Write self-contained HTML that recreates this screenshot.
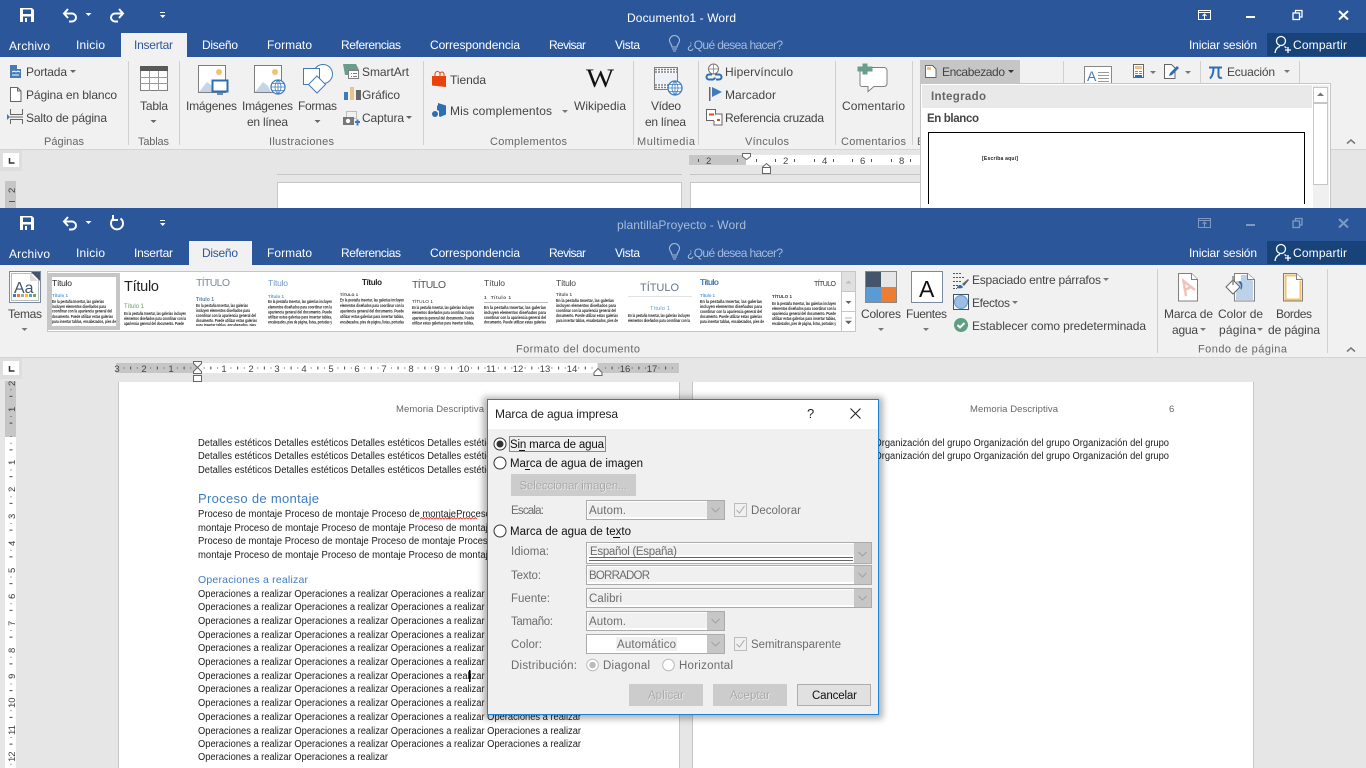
<!DOCTYPE html>
<html lang="es"><head><meta charset="utf-8"><title>Word</title>
<style>
html,body{margin:0;padding:0;background:#e6e6e6;overflow:hidden}
svg{display:block}
text{font-family:"Liberation Sans",sans-serif;font-size:12px;fill:#444;white-space:pre}
.tab{fill:#fff;font-size:12px}
.act{fill:#2b579a}
.gr{fill:#666;font-size:11px}
.w{fill:#fff}
.r{font-size:9.500px;fill:#444}
.b{font-size:10px;fill:#1c1c1c}
.g{font-size:4.200px;fill:#222;font-weight:bold}
.d{fill:#6d6d6d;font-size:11.500px}
.h{fill:#444}
.dis{fill:#a6a6a6;font-size:11.500px}
</style></head><body>
<svg xmlns="http://www.w3.org/2000/svg" width="1366" height="768" viewBox="0 0 1366 768">
<defs>
<clipPath id="gal"><rect x="48" y="272" width="794" height="54"/></clipPath>
<filter id="sh" x="-10%" y="-10%" width="120%" height="120%"><feGaussianBlur stdDeviation="3.5"/></filter>
<g id="save"><path d="M20 8h12l2 2v12H20z" fill="#fff"/><rect x="23" y="9.500" width="8" height="4.500" fill="#2b579a"/><rect x="23" y="16.500" width="8" height="5.500" fill="#2b579a"/><rect x="25" y="18" width="2" height="4" fill="#fff"/></g>
<g id="undo" fill="none" stroke="#fff" stroke-width="2"><path d="M68 9l-4 4.500 4 4.500"/><path d="M64.500 13.500H72a4 4 0 0 1 0 8h-3"/></g>
<g id="cust"><rect x="160" y="12" width="5" height="1" fill="#fff"/><path d="M160 15h5.500l-2.750 3z" fill="#fff"/><path d="M85.500 13h6l-3 3z" fill="#fff"/></g>
<g id="person" fill="none" stroke="#fff" stroke-width="1.300"><circle cx="1281" cy="41" r="4.500"/><path d="M1275 53c.5-4 2.500-6 5-6.500"/><path d="M1284.500 46.500l2 1.500"/><path d="M1288 47v6M1285 50h6"/></g>
<g id="bulb" fill="none" stroke="#a9bbd6" stroke-width="1.100"><path d="M672 47c0-3-2.500-3.500-2.500-6.500a5 5 0 0 1 10 0c0 3-2.500 3.500-2.500 6.500z"/><path d="M672 49h5M673 51h3"/></g>
</defs>

<!-- TOP WINDOW -->
<rect width="1366" height="57" fill="#2b579a"/>
<rect y="57" width="1366" height="92" fill="#f1f1f1"/>
<rect y="149" width="1366" height="1" fill="#d4d4d4"/>
<rect y="150" width="1366" height="58" fill="#e6e6e6"/>
<rect x="121" y="33" width="66" height="24" fill="#f1f1f1"/>
<rect x="1267" y="33" width="99" height="23" fill="#174379"/>
<use href="#save"/><use href="#undo"/><use href="#cust"/>
<g fill="none" stroke="#fff" stroke-width="2"><path d="M119 9l4 4.500-4 4.500"/><path d="M122.500 13.500H115a4 4 0 0 0 0 8h3"/></g>
<text x="627" y="22" textLength="109" class="w" style="font-size:12px">Documento1 - Word</text>
<g fill="none" stroke="#fff"><rect x="1198.500" y="10.500" width="12" height="9"/><path d="M1199 12.500h11" stroke-width="1"/><path d="M1204.500 19v-5M1202.500 16l2-2 2 2"/></g>
<rect x="1246" y="16" width="9" height="2" fill="#fff"/>
<g fill="none" stroke="#fff" stroke-width="1.300"><rect x="1293" y="13" width="6.500" height="6.500"/><path d="M1295.500 13v-2.500h6.500v6.500h-2.500"/></g>
<path d="M1339 11l9 8.500M1348 11l-9 8.500" stroke="#fff" stroke-width="2" fill="none"/>

<g class="tabs">
<text x="9" y="50" textLength="41" class="tab">Archivo</text>
<text x="76" y="49" textLength="29" class="tab">Inicio</text>
<text x="134" y="49" textLength="39" class="tab act">Insertar</text>
<text x="202" y="49" textLength="36" class="tab">Diseño</text>
<text x="267" y="49" textLength="45" class="tab">Formato</text>
<text x="341" y="49" textLength="60" class="tab">Referencias</text>
<text x="430" y="49" textLength="90" class="tab">Correspondencia</text>
<text x="549" y="49" textLength="37" class="tab">Revisar</text>
<text x="615" y="49" textLength="25" class="tab">Vista</text>
<text x="687" y="49" textLength="96" class="tab" style="fill:#a9bbd6">¿Qué desea hacer?</text>
<text x="1189" y="49" textLength="68" class="tab">Iniciar sesión</text>
<text x="1293" y="49" textLength="54" class="tab">Compartir</text>
</g>
<use href="#person"/><use href="#bulb"/>

<!-- separators top -->
<g fill="#d0d0d0"><rect x="128" y="61" width="1" height="84"/><rect x="179" y="61" width="1" height="84"/><rect x="423" y="61" width="1" height="84"/><rect x="633" y="61" width="1" height="84"/><rect x="698" y="61" width="1" height="84"/><rect x="835" y="61" width="1" height="84"/><rect x="912" y="61" width="1" height="84"/><rect x="1063" y="61" width="1" height="22"/><rect x="1200" y="61" width="1" height="22"/><rect x="1299" y="61" width="1" height="22"/></g>

<!-- Páginas -->
<path d="M10 65h7l4 4v9H10z" fill="#4a7ab5"/><path d="M17 65v4h4" fill="#fff"/><path d="M12 72l2-1 2 1 2-1 2 1M12 75h7" stroke="#fff" fill="none"/>
<path d="M10.500 87.500h7l3.500 3.500v10.500H10.500zM17.500 87.500v3.500H21" fill="#fff" stroke="#666"/>
<path d="M10.500 109v5.500h12V109M10.500 124v-4.500h12v4.500M10 117h13" fill="none" stroke="#666"/><path d="M7 114l3 3-3 3z" fill="#3f7cbf"/>
<text x="26" y="76" textLength="41">Portada</text><path d="M70 70h6l-3 3z" fill="#666"/>
<text x="26" y="99" textLength="91">Página en blanco</text>
<text x="26" y="122" textLength="81">Salto de página</text>
<text x="44" y="145" textLength="40" class="gr">Páginas</text>

<!-- Tablas -->
<rect x="140.500" y="66.500" width="27" height="24" fill="#fff" stroke="#808080"/><rect x="140" y="66" width="28" height="5" fill="#595959"/>
<path d="M140 77.500h28M140 83.500h28M149.500 71v20M158.500 71v20" stroke="#9a9a9a" fill="none"/>
<text x="140" y="110" textLength="28">Tabla</text><path d="M150.500 120h6l-3 3z" fill="#666"/>
<text x="138" y="145" textLength="31" class="gr">Tablas</text>

<!-- Ilustraciones -->
<g>
<rect x="198.500" y="65.500" width="27" height="27" fill="#fff" stroke="#7f7f7f"/><circle cx="219" cy="72" r="3" fill="#f0c36d"/><path d="M199 92l8-10 5 4 3 6z" fill="#c5d5e8"/>
<rect x="212.500" y="80.500" width="15" height="11" fill="#fff" stroke="#2e6fb2" stroke-width="2"/><path d="M217 94h6" stroke="#2e6fb2" stroke-width="1.500"/>
<rect x="254.500" y="65.500" width="27" height="27" fill="#fff" stroke="#7f7f7f"/><circle cx="275" cy="72" r="3" fill="#f0c36d"/><path d="M255 92l8-10 5 4 3 6z" fill="#c5d5e8"/>
<circle cx="278" cy="87" r="7" fill="#fff" stroke="#3f7cbf" stroke-width="1.300"/><path d="M271 87h14M278 80v14M272.500 83.500h11M272.500 90.500h11M278 80c-4 4-4 10 0 14M278 80c4 4 4 10 0 14" stroke="#3f7cbf" fill="none" stroke-width=".8"/>
<circle cx="323" cy="74" r="9.500" fill="#fff" stroke="#3f7cbf"/><rect x="303.500" y="68.500" width="16" height="16" fill="#fff" stroke="#3f7cbf"/><path d="M317 76l8.500 8.500-8.500 8.500-8.500-8.500z" fill="#fff" stroke="#3f7cbf"/>
<path d="M343 64h13l3 6h-10l-1 5h-3z" fill="#6a9e8c"/><rect x="348.500" y="70.500" width="10" height="8" fill="#fff" stroke="#7f7f7f"/><path d="M351 73.500h1M353 73.500h4M351 76.500h1M353 76.500h4" stroke="#7f7f7f"/>
<rect x="344" y="92" width="4" height="8" fill="#3f7cbf"/><rect x="350" y="87" width="4" height="13" fill="#e9c38b"/><rect x="356" y="90" width="5" height="10" fill="#666"/>
<rect x="346.500" y="111.500" width="10" height="7" fill="none" stroke="#888" stroke-dasharray="1 1"/><rect x="343" y="117" width="11" height="8" fill="#777"/><circle cx="348" cy="121" r="2.200" fill="#fff"/><path d="M355 122h5M357.500 119.500v6" stroke="#3f7cbf" stroke-width="2"/>
<text x="186" y="110" textLength="51">Imágenes</text>
<text x="242" y="110" textLength="51">Imágenes</text><text x="247" y="126" textLength="41">en línea</text>
<text x="298" y="110" textLength="39">Formas</text><path d="M314.500 120h6l-3 3z" fill="#666"/>
<text x="362" y="76" textLength="47">SmartArt</text><text x="362" y="99" textLength="38">Gráfico</text><text x="362" y="122" textLength="42">Captura</text><path d="M406 116h6l-3 3z" fill="#666"/>
<text x="269" y="145" textLength="65" class="gr">Ilustraciones</text>
</g>

<!-- Complementos -->
<path d="M432 76h14v11l-14-1.500z" fill="#e8420d"/><path d="M435 76v-2a2 2 0 0 1 5 0v2M440 74a2 2 0 0 1 4 0v2" stroke="#e8420d" fill="none"/>
<path d="M438 103l8 2.500v9l-6 2.500-1-1v-5l-2-1v-4l1-1z" fill="#2e6fb2"/><circle cx="435" cy="114" r="3" fill="#2e6fb2"/>
<text x="450" y="84" textLength="36">Tienda</text>
<text x="450" y="115" textLength="102">Mis complementos</text><path d="M562 110h6l-3 3z" fill="#777"/>
<text x="586" y="87" style="font-family:'Liberation Serif',serif;font-size:26px;fill:#111" textLength="28" lengthAdjust="spacingAndGlyphs">W</text>
<text x="574" y="110" textLength="52">Wikipedia</text>
<text x="490" y="145" textLength="77" class="gr">Complementos</text>

<!-- Multimedia -->
<rect x="654.500" y="67.500" width="23" height="22" fill="#fff" stroke="#7f7f7f"/><path d="M655 69.500h22M655 72h22M655 85h22M655 87.500h22" stroke="#7f7f7f" stroke-dasharray="2 1" stroke-width="1.500"/><rect x="655" y="73" width="22" height="11" fill="#eef2f7"/>
<circle cx="675" cy="88" r="7" fill="#fff" stroke="#3f7cbf" stroke-width="1.300"/><path d="M668 88h14M675 81v14M669.500 84.500h11M669.500 91.500h11M675 81c-4 4-4 10 0 14M675 81c4 4 4 10 0 14" stroke="#3f7cbf" fill="none" stroke-width=".8"/>
<text x="651" y="110" textLength="30">Vídeo</text><text x="645" y="126" textLength="41">en línea</text>
<text x="637" y="145" textLength="58" class="gr">Multimedia</text>

<!-- Vínculos -->
<circle cx="713.500" cy="69" r="5" fill="#fff" stroke="#777"/><path d="M708.500 69h10M713.500 64v10" stroke="#777" stroke-width=".7"/>
<path d="M712 75h-3a2.500 2.500 0 0 0 0 5h4a2.500 2.500 0 0 0 2-2M715 75h4a2.500 2.500 0 0 1 0 5h-3" stroke="#2e6fb2" stroke-width="2" fill="none" transform="translate(0,-.5)"/>
<rect x="709" y="87" width="1.500" height="14" fill="#666"/><path d="M712 87l10 5-10 5z" fill="#3f7cbf"/>
<rect x="706.500" y="109.500" width="9" height="11" fill="#fff" stroke="#666"/><path d="M715.500 114h6.500v11h-8v-4" fill="#fff" stroke="#666"/><rect x="709" y="113.500" width="5" height="2" fill="#d94a2b"/><rect x="717" y="119" width="3" height="2" fill="#d94a2b"/>
<text x="725" y="76" textLength="68">Hipervínculo</text><text x="725" y="99" textLength="51">Marcador</text><text x="725" y="122" textLength="99">Referencia cruzada</text>
<text x="745" y="145" textLength="44" class="gr">Vínculos</text>

<!-- Comentarios -->
<path d="M862 67.500h22a3 3 0 0 1 3 3v13a3 3 0 0 1-3 3h-10l-6 5v-5h-6a2 2 0 0 1-2-2v-15z" fill="#fff" stroke="#808080"/>
<path d="M858 66h5v-3h5v3h5v5h-5v3h-5v-3h-5z" fill="#6a9e8c" transform="translate(-.500,.5)"/>
<text x="842" y="110" textLength="63">Comentario</text>
<text x="841" y="145" textLength="65" class="gr">Comentarios</text>
<text x="917" y="145" class="gr">E</text>

<!-- Encabezado etc -->
<rect x="920" y="60" width="100" height="23" fill="#c6c6c6"/>
<path d="M925.500 65.500h7l3.500 3.500v8.500H925.500z" fill="#fff" stroke="#666"/><rect x="927" y="67" width="4" height="3" fill="#f0c36d"/>
<text x="942" y="76" textLength="63">Encabezado</text><path d="M1008 70h6l-3 3z" fill="#333"/>
<rect x="1084.500" y="66.500" width="27" height="20" fill="#fff" stroke="#888"/><text x="1087" y="81" style="font-size:14px;fill:#3f7cbf">A</text><path d="M1098 72.500h11M1098 75.500h11M1098 78.500h11M1098 81.500h11" stroke="#999"/>
<rect x="1133.500" y="64.500" width="10" height="13" fill="#fff" stroke="#666"/><rect x="1135" y="66" width="7" height="3" fill="#e9c38b"/><path d="M1135 71.500h3M1139 71.500h3M1135 73.500h3M1139 73.500h3" stroke="#888"/><rect x="1135" y="75" width="7" height="2" fill="#2e6fb2"/>
<path d="M1150 71h6l-3 3z" fill="#777"/>
<path d="M1164.500 64.500h7l3.500 3.500v10.500H1164.500z" fill="#fff" stroke="#666"/><path d="M1169 76l1-3 7-7 2 2-7 7z" fill="#2e6fb2"/>
<path d="M1185 71h6l-3 3z" fill="#777"/>
<path d="M1209 67.500h13M1213.500 68c0 5-1 8-3.500 10.500M1218.500 68v7.500c0 2 1.500 3 3.500 2" fill="none" stroke="#2e6fb2" stroke-width="2"/>
<text x="1227" y="76" textLength="48">Ecuación</text><path d="M1284 70h6l-3 3z" fill="#777"/>
<path d="M1347 143.500l4-3.500 4 3.500" fill="none" stroke="#777" stroke-width="1.500"/>

<!-- Top lower area -->
<rect x="0" y="150" width="22" height="21" fill="#dedede"/>
<rect x="3" y="153" width="16" height="14" fill="#fff"/><path d="M9.500 158v5h5" fill="none" stroke="#333" stroke-width="1.500"/>
<rect x="5" y="181" width="11" height="27" fill="#c6c6c6"/>
<text transform="translate(15,193) rotate(-90)" class="r">2</text>
<rect x="9" y="201" width="6" height="1" fill="#555"/>
<rect x="689" y="155" width="57" height="10" fill="#c6c6c6"/><rect x="746" y="155" width="174" height="10" fill="#fff"/>
<g class="r"><text x="706" y="164" class="r">2</text><text x="783" y="164" class="r">2</text><text x="822" y="164" class="r">4</text><text x="860" y="164" class="r">6</text><text x="899" y="164" class="r">8</text></g>
<path d="M698.500 159v3M737.500 159v3M756.500 159v3M775.500 159v3M794.500 159v3M814.500 159v3M833.500 159v3M852.500 159v3M871.500 159v3M891.500 159v3M910.500 159v3" stroke="#555" fill="none"/>
<path d="M742.500 153.500h8v3l-4 3-4-3z" fill="#fff" stroke="#666"/>
<path d="M762.500 167l4-3.500 4 3.500v6.500h-8z" fill="#fff" stroke="#666"/><path d="M762.500 167.500h8" stroke="#666"/>
<rect x="277" y="174" width="405" height="1" fill="#c6c6c6"/><rect x="690" y="174" width="230" height="1" fill="#c6c6c6"/>
<rect x="277.500" y="182.500" width="404" height="30" fill="#fff" stroke="#c6c6c6"/>
<rect x="690.500" y="182.500" width="300" height="30" fill="#fff" stroke="#c6c6c6"/>

<!-- Dropdown -->
<rect x="920.500" y="83.500" width="410" height="130" fill="#fff" stroke="#c6c6c6"/>
<rect x="922" y="85" width="390" height="23" fill="#e9e9e9"/>
<text x="931" y="100" textLength="55" style="font-weight:bold;fill:#666;font-size:11.500px">Integrado</text>
<text x="927" y="122" textLength="52" style="font-weight:bold;fill:#444;font-size:11.500px">En blanco</text>
<path d="M928.500 204V132.500h376V204" fill="#fff" stroke="#000"/>
<text x="982" y="160" textLength="36" style="font-size:5px;font-weight:bold;fill:#222">[Escriba aquí]</text>
<rect x="1313" y="85" width="16" height="123" fill="#f0f0f0"/>
<rect x="1313.500" y="87.500" width="14" height="15" fill="#fff" stroke="#c6c6c6"/><path d="M1317 96h7l-3.500-3.500z" fill="#777"/>
<rect x="1313.500" y="103.500" width="14" height="81" fill="#fff" stroke="#c6c6c6"/>

<!-- SECOND WINDOW -->
<rect y="208" width="1366" height="57" fill="#2b579a"/>
<rect y="265" width="1366" height="92" fill="#f1f1f1"/>
<rect y="357" width="1366" height="1" fill="#d4d4d4"/>
<rect y="358" width="1366" height="410" fill="#e6e6e6"/>
<rect x="189" y="241" width="63" height="24" fill="#f1f1f1"/>
<rect x="1267" y="241" width="99" height="23" fill="#174379"/>
<g transform="translate(0,208)"><use href="#save"/><use href="#undo"/><use href="#cust"/><use href="#person"/><use href="#bulb"/>
<path d="M113.500 10.500a6 6 0 1 0 7 0" fill="none" stroke="#fff" stroke-width="2"/><path d="M113 7v5h5" fill="none" stroke="#fff" stroke-width="2"/></g>
<text x="617" y="229" textLength="129" style="fill:#a9bbd6;font-size:12px">plantillaProyecto - Word</text>
<g transform="translate(0,208)" fill="none" stroke="#7f9ac0"><rect x="1198.500" y="10.500" width="12" height="9"/><path d="M1199 12.500h11"/><path d="M1204.500 19v-5M1202.500 16l2-2 2 2"/><path d="M1246 17h9" stroke-width="2"/><g stroke-width="1.300"><rect x="1293" y="13" width="6.500" height="6.500"/><path d="M1295.500 13v-2.500h6.500v6.500h-2.500"/></g><path d="M1339 11l9 8.500M1348 11l-9 8.500" stroke-width="2"/></g>

<text x="9" y="258" textLength="41" class="tab">Archivo</text>
<text x="76" y="257" textLength="29" class="tab">Inicio</text>
<text x="134" y="257" textLength="39" class="tab">Insertar</text>
<text x="202" y="257" textLength="36" class="tab act">Diseño</text>
<text x="267" y="257" textLength="45" class="tab">Formato</text>
<text x="341" y="257" textLength="60" class="tab">Referencias</text>
<text x="430" y="257" textLength="90" class="tab">Correspondencia</text>
<text x="549" y="257" textLength="37" class="tab">Revisar</text>
<text x="615" y="257" textLength="25" class="tab">Vista</text>
<text x="687" y="257" textLength="96" class="tab" style="fill:#a9bbd6">¿Qué desea hacer?</text>
<text x="1189" y="257" textLength="68" class="tab">Iniciar sesión</text>
<text x="1293" y="257" textLength="54" class="tab">Compartir</text>

<!-- Temas -->
<rect x="9.500" y="271.500" width="31" height="31" fill="#fff" stroke="#7a8aa0"/>
<rect x="11.500" y="273.500" width="27" height="27" fill="#fff" stroke="#bbb"/>
<path d="M31 272h9v9z" fill="#44546a"/><path d="M30 273l8 8h-8z" fill="#ddd"/>
<text x="14" y="293" style="font-size:16px;fill:#44546a">Aa</text>
<g><rect x="13" y="294" width="3" height="3" fill="#4472c4"/><rect x="17" y="294" width="3" height="3" fill="#ed7d31"/><rect x="21" y="294" width="3" height="3" fill="#a5a5a5"/><rect x="25" y="294" width="3" height="3" fill="#ffc000"/><rect x="29" y="294" width="3" height="3" fill="#5b9bd5"/><rect x="33" y="294" width="3" height="3" fill="#70ad47"/></g>
<text x="8" y="318" textLength="34">Temas</text><path d="M21.500 328h6l-3 3z" fill="#777"/>

<!-- Gallery -->
<rect x="47.500" y="271.500" width="808" height="60" fill="#fff" stroke="#c6c6c6"/>
<rect x="48" y="273" width="72" height="57" fill="#c6c6c6"/><rect x="52" y="277" width="64" height="49" fill="#fff"/>
<rect x="842" y="272" width="13" height="19" fill="#e0e0e0"/><path d="M842 291.500h13M842 311.500h13M841.500 272v59" stroke="#c6c6c6"/>
<path d="M845.500 283.500h6l-3-3z" fill="#bbb"/><path d="M845.500 301h6l-3 3z" fill="#666"/><path d="M845 318h7M845.500 321h6l-3 3z" fill="#666" stroke="#666" stroke-width=".5"/>
<g clip-path="url(#gal)">
<text x="52" y="286" textLength="20" style="font-size:8.500px;fill:#222">Título</text>
<text x="52" y="297" textLength="16" style="font-size:4.500px;fill:#5b9bd5;font-weight:bold">Título 1</text>
<text x="52" y="303" textLength="52" lengthAdjust="spacingAndGlyphs" class="g">En la pestaña Insertar, las galerías</text><text x="52" y="308" textLength="54" lengthAdjust="spacingAndGlyphs" class="g">incluyen elementos diseñados para</text><text x="52" y="312.500" textLength="60" lengthAdjust="spacingAndGlyphs" class="g">coordinar con la apariencia general del</text><text x="52" y="318" textLength="61" lengthAdjust="spacingAndGlyphs" class="g">documento. Puede utilizar estas galerías</text><text x="52" y="323" textLength="64" lengthAdjust="spacingAndGlyphs" class="g">para insertar tablas, encabezados, pies de</text>

<text x="124" y="291" textLength="35" style="font-size:14.500px;fill:#222">Título</text>
<text x="124" y="308" textLength="20" style="font-size:6px;fill:#6b9a56">Título 1</text>
<text x="124" y="315" textLength="62" lengthAdjust="spacingAndGlyphs" class="g">En la pestaña Insertar, las galerías incluyen</text><text x="124" y="320" textLength="62" lengthAdjust="spacingAndGlyphs" class="g">elementos diseñados para coordinar con la</text><text x="124" y="325" textLength="60" lengthAdjust="spacingAndGlyphs" class="g">apariencia general del documento. Puede</text>

<text x="196" y="286" textLength="34" style="font-size:10.500px;fill:#7a8aa0">TÍTULO</text>
<text x="196" y="301" textLength="18" style="font-size:5px;fill:#5a7fa8;font-weight:bold">Título 1</text>
<text x="196" y="307" textLength="52" lengthAdjust="spacingAndGlyphs" class="g">En la pestaña Insertar, las galerías</text><text x="196" y="312" textLength="54" lengthAdjust="spacingAndGlyphs" class="g">incluyen elementos diseñados para</text><text x="196" y="317" textLength="60" lengthAdjust="spacingAndGlyphs" class="g">coordinar con la apariencia general del</text><text x="196" y="322" textLength="61" lengthAdjust="spacingAndGlyphs" class="g">documento. Puede utilizar estas galerías</text><text x="196" y="326.500" textLength="60" lengthAdjust="spacingAndGlyphs" class="g">para insertar tablas, encabezados, pies</text>

<text x="268" y="286" textLength="20" style="font-size:8.500px;fill:#6f9bc8">Título</text>
<text x="268" y="298" textLength="16" style="font-size:4.500px;fill:#5b9bd5;font-weight:bold">Título 1</text>
<text x="268" y="303" textLength="64" lengthAdjust="spacingAndGlyphs" class="g">En la pestaña Insertar, las galerías incluyen</text><text x="268" y="308.500" textLength="64" lengthAdjust="spacingAndGlyphs" class="g">elementos diseñados para coordinar con la</text><text x="268" y="313.500" textLength="64" lengthAdjust="spacingAndGlyphs" class="g">apariencia general del documento. Puede</text><text x="268" y="318.500" textLength="64" lengthAdjust="spacingAndGlyphs" class="g">utilizar estas galerías para insertar tablas,</text><text x="268" y="323.500" textLength="64" lengthAdjust="spacingAndGlyphs" class="g">encabezados, pies de página, listas, portadas y</text>

<text x="362" y="285" textLength="20" style="font-size:8px;fill:#222;font-weight:bold">Título</text>
<text x="340" y="296" textLength="18" style="font-size:3.800px;fill:#222;font-weight:bold">TÍTULO 1</text>
<text x="340" y="301.500" textLength="64" lengthAdjust="spacingAndGlyphs" class="g">En la pestaña Insertar, las galerías incluyen</text><text x="340" y="307" textLength="64" lengthAdjust="spacingAndGlyphs" class="g">elementos diseñados para coordinar con la</text><text x="340" y="312.500" textLength="64" lengthAdjust="spacingAndGlyphs" class="g">apariencia general del documento. Puede</text><text x="340" y="318" textLength="64" lengthAdjust="spacingAndGlyphs" class="g">utilizar estas galerías para insertar tablas,</text><text x="340" y="323.500" textLength="64" lengthAdjust="spacingAndGlyphs" class="g">encabezados, pies de página, listas, portadas</text>

<text x="412" y="288" textLength="34" style="font-size:10.500px;fill:#555">TÍTULO</text>
<text x="412" y="303" textLength="21" style="font-size:4.800px;fill:#333">TÍTULO 1</text>
<text x="412" y="309" textLength="62" lengthAdjust="spacingAndGlyphs" class="g">En la pestaña Insertar, las galerías incluyen</text><text x="412" y="314" textLength="62" lengthAdjust="spacingAndGlyphs" class="g">elementos diseñados para coordinar con la</text><text x="412" y="319.500" textLength="62" lengthAdjust="spacingAndGlyphs" class="g">apariencia general del documento. Puede</text><text x="412" y="324.500" textLength="62" lengthAdjust="spacingAndGlyphs" class="g">utilizar estas galerías para insertar tablas,</text>

<text x="484" y="286" textLength="21" style="font-size:8.500px;fill:#444">Título</text>
<text x="484" y="299" textLength="27" style="font-size:4.500px;fill:#444;font-weight:bold">1  Título 1</text>
<rect x="484" y="302" width="64" height="1" fill="#bbb"/>
<text x="484" y="309" textLength="62" lengthAdjust="spacingAndGlyphs" class="g">En la pestaña Insertar, las galerías</text><text x="484" y="314" textLength="62" lengthAdjust="spacingAndGlyphs" class="g">incluyen elementos diseñados para</text><text x="484" y="319" textLength="62" lengthAdjust="spacingAndGlyphs" class="g">coordinar con la apariencia general del</text><text x="484" y="323.500" textLength="62" lengthAdjust="spacingAndGlyphs" class="g">documento. Puede utilizar estas galerías</text>

<text x="556" y="286" textLength="20" style="font-size:8.500px;fill:#444">Título</text>
<text x="556" y="296" textLength="16" style="font-size:4.500px;fill:#555;font-weight:bold">Título 1</text>
<text x="556" y="302" textLength="58" lengthAdjust="spacingAndGlyphs" class="g">En la pestaña Insertar, las galerías</text><text x="556" y="307" textLength="60" lengthAdjust="spacingAndGlyphs" class="g">incluyen elementos diseñados para</text><text x="556" y="312" textLength="60" lengthAdjust="spacingAndGlyphs" class="g">coordinar con la apariencia general del</text><text x="556" y="317" textLength="62" lengthAdjust="spacingAndGlyphs" class="g">documento. Puede utilizar estas galerías</text><text x="556" y="322" textLength="62" lengthAdjust="spacingAndGlyphs" class="g">para insertar tablas, encabezados, pies de</text>

<text x="640" y="291" textLength="39" style="font-size:11px;fill:#667788">TÍTULO</text>
<rect x="628" y="296" width="64" height="1" fill="#e2e2e2"/>
<text x="650" y="310" textLength="20" style="font-size:5.500px;fill:#5b9bd5">Título 1</text>
<text x="628" y="317" textLength="62" lengthAdjust="spacingAndGlyphs" class="g">En la pestaña Insertar, las galerías incluyen</text><text x="628" y="322" textLength="62" lengthAdjust="spacingAndGlyphs" class="g">elementos diseñados para coordinar con la</text>

<text x="700" y="285" textLength="19" style="font-size:8.500px;fill:#4f7fb8;font-weight:bold">Título</text>
<text x="700" y="297" textLength="15" style="font-size:4.500px;fill:#5b9bd5;font-weight:bold">Título 1</text>
<text x="700" y="303" textLength="62" lengthAdjust="spacingAndGlyphs" class="g">En la pestaña Insertar, las galerías</text><text x="700" y="308" textLength="62" lengthAdjust="spacingAndGlyphs" class="g">incluyen elementos diseñados para</text><text x="700" y="313" textLength="62" lengthAdjust="spacingAndGlyphs" class="g">coordinar con la apariencia general del</text><text x="700" y="318" textLength="62" lengthAdjust="spacingAndGlyphs" class="g">documento. Puede utilizar estas galerías</text><text x="700" y="323" textLength="64" lengthAdjust="spacingAndGlyphs" class="g">para insertar tablas, encabezados, pies de</text>

<text x="814" y="286" textLength="22" style="font-size:7px;fill:#333">TÍTULO</text>
<text x="772" y="298" textLength="20" style="font-size:4.500px;fill:#333;font-weight:bold">TÍTULO 1</text>
<text x="772" y="305" textLength="64" lengthAdjust="spacingAndGlyphs" class="g">En la pestaña Insertar, las galerías incluyen</text><text x="772" y="310" textLength="64" lengthAdjust="spacingAndGlyphs" class="g">elementos diseñados para coordinar con la</text><text x="772" y="315" textLength="64" lengthAdjust="spacingAndGlyphs" class="g">apariencia general del documento. Puede</text><text x="772" y="320" textLength="64" lengthAdjust="spacingAndGlyphs" class="g">utilizar estas galerías para insertar tablas,</text><text x="772" y="325" textLength="64" lengthAdjust="spacingAndGlyphs" class="g">encabezados, pies de página, listas, portadas y</text>
</g>
<text x="516" y="352.500" textLength="124" class="gr">Formato del documento</text>

<!-- Colores / Fuentes -->
<rect x="865" y="271" width="32" height="32" fill="#888"/>
<rect x="866" y="272" width="15" height="15" fill="#44546a"/><rect x="881" y="272" width="15" height="15" fill="#e7e6e6"/><rect x="866" y="287" width="15" height="15" fill="#5b9bd5"/><rect x="881" y="287" width="15" height="15" fill="#ed7d31"/>
<text x="861" y="318" textLength="40">Colores</text><path d="M878 328h6l-3 3z" fill="#777"/>
<rect x="911.500" y="271.500" width="31" height="31" fill="#fff" stroke="#7a8aa0"/>
<text x="919" y="297" style="font-size:23px;fill:#111">A</text>
<text x="906" y="318" textLength="41">Fuentes</text><path d="M923 328h6l-3 3z" fill="#777"/>
<g stroke="#555"><path d="M953 273.500h8M953 277.500h11M953 281.500h8M953 285.500h8M953 288.500h4" fill="none" stroke-dasharray="2 1"/></g><path d="M957 288c0-2 2-3 4-3l2 2c0 1-3 2-6 1z" fill="#2e6fb2"/><path d="M962 284l6-5 1 1-5 6z" fill="#666"/>
<text x="972" y="284" textLength="129">Espaciado entre párrafos</text><path d="M1103 278h6l-3 3z" fill="#777"/>
<rect x="953.500" y="294.500" width="15" height="15" fill="#fff" stroke="#44546a"/><circle cx="961" cy="302" r="6.500" fill="#9dbde4" stroke="#5b9bd5"/>
<text x="972" y="307" textLength="38">Efectos</text><path d="M1012 301h6l-3 3z" fill="#777"/>
<circle cx="961" cy="325" r="7" fill="#5e9e83"/><path d="M957.500 325l2.500 2.500 4.500-4.500" fill="none" stroke="#fff" stroke-width="2"/>
<text x="972" y="330" textLength="174">Establecer como predeterminada</text>
<rect x="1157" y="269" width="1" height="84" fill="#d0d0d0"/><rect x="1327" y="269" width="1" height="84" fill="#d0d0d0"/>

<!-- Fondo -->
<path d="M1178.500 273.500h13l6 6v21.500h-19z" fill="#fff" stroke="#808080"/><path d="M1191.500 273.500v6h6" fill="#fff" stroke="#808080"/>
<path d="M1186 296L1183.500 281 1195 290M1185 290l6-3" fill="none" stroke="#f2c2b8" stroke-width="2.500"/>
<path d="M1234.500 273.500h13l7 6v21.500h-20z" fill="#fff" stroke="#808080"/><path d="M1236 281h5v-6h6l6 6v19h-17z" fill="#bdd1e8"/><path d="M1247.500 273.500v6h7" fill="#fff" stroke="#808080"/>
<path d="M1226 287l7-7 7 7-7 7z" fill="#fff" stroke="#666"/><path d="M1233 276v9" stroke="#888" stroke-width="1.500" fill="none"/><path d="M1240 281c2 1 3 3 2 7l-1 2-1-3 1 1c0-3-1-5-3-6z" fill="#2e6fb2"/>
<path d="M1283.500 273.500h13l6 6v21.500h-19z" fill="#fff" stroke="#808080"/><path d="M1296.500 273.500v6h6" fill="#fff" stroke="#808080"/>
<path d="M1296 275.500h-10.500v24h15v-19" fill="none" stroke="#f0c36d" stroke-width="2"/>
<text x="1164" y="318" textLength="49">Marca de</text><text x="1172" y="334" textLength="26">agua</text><path d="M1200 328h6l-3 3z" fill="#777"/>
<text x="1218" y="318" textLength="45">Color de</text><text x="1219" y="334" textLength="37">página</text><path d="M1257 328h6l-3 3z" fill="#777"/>
<text x="1276" y="318" textLength="36">Bordes</text><text x="1268" y="334" textLength="52">de página</text>
<text x="1198" y="352.500" textLength="89" class="gr">Fondo de página</text>
<path d="M1347 351.500l4-3.500 4 3.500" fill="none" stroke="#777" stroke-width="1.500"/>

<!-- Ruler -->
<rect x="0" y="358" width="22" height="21" fill="#dedede"/>
<rect x="3" y="361" width="16" height="14" fill="#fff"/><path d="M9.500 366v5h5" fill="none" stroke="#333" stroke-width="1.500"/>
<rect x="116" y="363" width="81" height="10" fill="#c6c6c6"/><rect x="197" y="363" width="400" height="10" fill="#fff"/><rect x="598" y="363" width="81" height="10" fill="#c6c6c6"/>
<line x1="123.400" y1="368" x2="679" y2="368" stroke="#555" stroke-dasharray="1 5.690 1 5.690 1 12.370"/>
<line x1="130.100" y1="368" x2="679" y2="368" stroke="#555" stroke-width="3" stroke-dasharray="1 25.750"/>
<g text-anchor="middle">
<text x="117" y="372" class="r" text-anchor="middle">3</text><text x="144" y="372" class="r" text-anchor="middle">2</text><text x="171" y="372" class="r" text-anchor="middle">1</text>
<text x="224" y="372" class="r" text-anchor="middle">1</text><text x="251" y="372" class="r" text-anchor="middle">2</text><text x="277" y="372" class="r" text-anchor="middle">3</text><text x="304" y="372" class="r" text-anchor="middle">4</text><text x="331" y="372" class="r" text-anchor="middle">5</text><text x="357" y="372" class="r" text-anchor="middle">6</text><text x="384" y="372" class="r" text-anchor="middle">7</text><text x="411" y="372" class="r" text-anchor="middle">8</text><text x="437" y="372" class="r" text-anchor="middle">9</text><text x="464" y="372" class="r" text-anchor="middle">10</text><text x="491" y="372" class="r" text-anchor="middle">11</text><text x="518" y="372" class="r" text-anchor="middle">12</text><text x="545" y="372" class="r" text-anchor="middle">13</text><text x="572" y="372" class="r" text-anchor="middle">14</text><text x="625" y="372" class="r" text-anchor="middle">16</text><text x="652" y="372" class="r" text-anchor="middle">17</text>
</g>
<path d="M193.500 361.500h8v2l-4 4-4-4z" fill="#fff" stroke="#666"/><path d="M193.500 373.500v-2l4-4 4 4v2z" fill="#fff" stroke="#666"/><rect x="193.500" y="375.500" width="8" height="6" fill="#fff" stroke="#666"/>
<path d="M594 375.500v-3l4-4 4 4v3z" fill="#fff" stroke="#666"/>

<!-- Vertical ruler -->
<rect x="5" y="381" width="11" height="56" fill="#c6c6c6"/><rect x="5" y="437" width="11" height="331" fill="#fff"/>
<line x1="11" y1="389.190" x2="11" y2="768" stroke="#555" stroke-dasharray="1 5.690 1 12.370 1 5.690"/>
<line x1="11" y1="395.900" x2="11" y2="768" stroke="#555" stroke-width="3" stroke-dasharray="1 25.750" stroke-dashoffset="0"/>
<g>
<text transform="translate(15,386) rotate(-90)" class="r">2</text><text transform="translate(15,412) rotate(-90)" class="r">1</text><text transform="translate(15,465) rotate(-90)" class="r">1</text><text transform="translate(15,492) rotate(-90)" class="r">2</text><text transform="translate(15,519) rotate(-90)" class="r">3</text><text transform="translate(15,546) rotate(-90)" class="r">4</text><text transform="translate(15,573) rotate(-90)" class="r">5</text><text transform="translate(15,599) rotate(-90)" class="r">6</text><text transform="translate(15,626) rotate(-90)" class="r">7</text><text transform="translate(15,653) rotate(-90)" class="r">8</text><text transform="translate(15,679) rotate(-90)" class="r">9</text><text transform="translate(15,708) rotate(-90)" class="r">10</text><text transform="translate(15,735) rotate(-90)" class="r">11</text><text transform="translate(15,762) rotate(-90)" class="r">12</text>
</g>

<!-- Pages -->
<rect x="118" y="382" width="1" height="386" fill="#c6c6c6"/>
<rect x="119" y="382" width="560" height="386" fill="#fff"/>
<rect x="679" y="382" width="1" height="386" fill="#c6c6c6"/><rect x="692" y="382" width="1" height="386" fill="#c6c6c6"/>
<rect x="693" y="382" width="560" height="386" fill="#fff"/>
<rect x="1253" y="382" width="1" height="386" fill="#c6c6c6"/>

<text x="396" y="412" textLength="88" style="font-size:9.500px;fill:#666">Memoria Descriptiva</text>
<text x="970" y="412" textLength="88" style="font-size:9.500px;fill:#666">Memoria Descriptiva</text>
<text x="1169" y="412" style="font-size:9.500px;fill:#666">6</text>
<text x="198" y="446" textLength="303" lengthAdjust="spacingAndGlyphs" class="b">Detalles estéticos Detalles estéticos Detalles estéticos Detalles estéticos</text>
<text x="198" y="459" textLength="303" lengthAdjust="spacingAndGlyphs" class="b">Detalles estéticos Detalles estéticos Detalles estéticos Detalles estéticos</text>
<text x="198" y="473" textLength="303" lengthAdjust="spacingAndGlyphs" class="b">Detalles estéticos Detalles estéticos Detalles estéticos Detalles estéticos</text>
<text x="198" y="503" textLength="121" style="font-size:13px;fill:#3f7cbf">Proceso de montaje</text>
<text x="198" y="517" textLength="306" lengthAdjust="spacingAndGlyphs" class="b">Proceso de montaje Proceso de montaje Proceso de montajeProceso de</text>
<text x="198" y="531" textLength="295" lengthAdjust="spacingAndGlyphs" class="b">montaje Proceso de montaje Proceso de montaje Proceso de montaje</text>
<text x="198" y="544" textLength="308" lengthAdjust="spacingAndGlyphs" class="b">Proceso de montaje Proceso de montaje Proceso de montaje Proceso de</text>
<text x="198" y="558" textLength="295" lengthAdjust="spacingAndGlyphs" class="b">montaje Proceso de montaje Proceso de montaje Proceso de montaje</text>
<path d="M420 519l1.500-1.500 1.500 1.500 1.500-1.500 1.500 1.500 1.500-1.500 1.500 1.500 1.500-1.500 1.500 1.500 1.500-1.500 1.500 1.500 1.500-1.500 1.500 1.500 1.500-1.500 1.500 1.500 1.500-1.500 1.500 1.500 1.500-1.500 1.500 1.500 1.500-1.500 1.500 1.500 1.500-1.500 1.500 1.500 1.500-1.500 1.500 1.500 1.500-1.500 1.500 1.500 1.500-1.500 1.500 1.500 1.500-1.500 1.500 1.500 1.500-1.500 1.500 1.500 1.500-1.500 1.500 1.500 1.500-1.500 1.500 1.500 1.500-1.500 1.500 1.500" fill="none" stroke="#e33" stroke-width=".8"/>
<text x="198" y="583" textLength="110" style="font-size:10.500px;fill:#3f7cbf">Operaciones a realizar</text>
<g>
<text x="198" y="597" textLength="383" lengthAdjust="spacingAndGlyphs" class="b">Operaciones a realizar Operaciones a realizar Operaciones a realizar Operaciones a realizar</text>
<text x="198" y="610" textLength="383" lengthAdjust="spacingAndGlyphs" class="b">Operaciones a realizar Operaciones a realizar Operaciones a realizar Operaciones a realizar</text>
<text x="198" y="624" textLength="383" lengthAdjust="spacingAndGlyphs" class="b">Operaciones a realizar Operaciones a realizar Operaciones a realizar Operaciones a realizar</text>
<text x="198" y="638" textLength="383" lengthAdjust="spacingAndGlyphs" class="b">Operaciones a realizar Operaciones a realizar Operaciones a realizar Operaciones a realizar</text>
<text x="198" y="651" textLength="383" lengthAdjust="spacingAndGlyphs" class="b">Operaciones a realizar Operaciones a realizar Operaciones a realizar Operaciones a realizar</text>
<text x="198" y="665" textLength="383" lengthAdjust="spacingAndGlyphs" class="b">Operaciones a realizar Operaciones a realizar Operaciones a realizar Operaciones a realizar</text>
<text x="198" y="679" textLength="383" lengthAdjust="spacingAndGlyphs" class="b">Operaciones a realizar Operaciones a realizar Operaciones a realizar Operaciones a realizar</text>
<text x="198" y="692" textLength="383" lengthAdjust="spacingAndGlyphs" class="b">Operaciones a realizar Operaciones a realizar Operaciones a realizar Operaciones a realizar</text>
<text x="198" y="706" textLength="383" lengthAdjust="spacingAndGlyphs" class="b">Operaciones a realizar Operaciones a realizar Operaciones a realizar Operaciones a realizar</text>
<text x="198" y="720" textLength="383" lengthAdjust="spacingAndGlyphs" class="b">Operaciones a realizar Operaciones a realizar Operaciones a realizar Operaciones a realizar</text>
<text x="198" y="734" textLength="383" lengthAdjust="spacingAndGlyphs" class="b">Operaciones a realizar Operaciones a realizar Operaciones a realizar Operaciones a realizar</text>
<text x="198" y="747" textLength="383" lengthAdjust="spacingAndGlyphs" class="b">Operaciones a realizar Operaciones a realizar Operaciones a realizar Operaciones a realizar</text>
<text x="198" y="760" textLength="190" lengthAdjust="spacingAndGlyphs" class="b">Operaciones a realizar Operaciones a realizar</text>
</g>
<text x="874.500" y="446" textLength="294.500" lengthAdjust="spacingAndGlyphs" class="b">Organización del grupo Organización del grupo Organización del grupo</text>
<text x="874.500" y="459" textLength="294.500" lengthAdjust="spacingAndGlyphs" class="b">Organización del grupo Organización del grupo Organización del grupo</text>
<rect x="469" y="670" width="1.500" height="12" fill="#000"/>

<!-- DIALOG -->
<rect x="483" y="397" width="400" height="322" fill="#000" opacity=".3" filter="url(#sh)"/>
<rect x="487" y="399" width="392" height="316" fill="#1883d7"/>
<rect x="488" y="400" width="390" height="29" fill="#fff"/>
<rect x="488" y="429" width="390" height="285" fill="#f0f0f0"/>
<text x="495" y="418" textLength="123" style="font-size:12px;fill:#222">Marca de agua impresa</text>
<text x="807" y="418" style="font-size:13px;fill:#222">?</text>
<path d="M850.500 408.500l10 10M860.500 408.500l-10 10" stroke="#222" stroke-width="1.100" fill="none"/>

<circle cx="500" cy="444" r="6" fill="#fff" stroke="#333"/><circle cx="500" cy="444" r="3.500" fill="#333"/>
<rect x="509.500" y="436.500" width="96" height="15" fill="none" stroke="#222" stroke-dasharray="1 1"/>
<text x="510" y="448" textLength="94" style="font-size:11.500px;fill:#111">Sin marca de agua</text><rect x="519" y="450" width="6" height="1" fill="#111"/>
<circle cx="500" cy="463" r="6" fill="#fff" stroke="#333"/>
<text x="510" y="467" textLength="133" style="font-size:11.500px;fill:#111">Marca de agua de imagen</text><rect x="525" y="469" width="5" height="1" fill="#111"/>
<rect x="511" y="474" width="125" height="22" fill="#ccc"/>
<text x="520" y="490" textLength="108" style="font-size:11.500px;fill:#fff">Seleccionar imagen...</text>
<text x="519.500" y="489.500" textLength="108" class="dis">Seleccionar imagen...</text>
<circle cx="500" cy="531" r="6" fill="#fff" stroke="#333"/>
<text x="510" y="535" textLength="121" style="font-size:11.500px;fill:#111">Marca de agua de texto</text><rect x="613" y="537" width="7" height="1" fill="#111"/>

<text x="511" y="514" textLength="33" class="d">Escala:</text>
<rect x="586.500" y="500.500" width="138" height="19" fill="#fff" stroke="#ababab"/><rect x="588" y="502" width="119" height="15" fill="#f0f0f0"/><rect x="707" y="501" width="17" height="18" fill="#c6c6c6"/>
<path d="M711.500 508l4 4 4-4" fill="none" stroke="#a2a2a2"/>
<text x="589" y="514" textLength="37" class="d">Autom.</text>
<rect x="734.500" y="503.500" width="12" height="13" fill="#f0f0f0" stroke="#bcbcbc"/><path d="M736.500 510l3 3 5-7" fill="none" stroke="#a9a9a9"/>
<text x="751" y="514" textLength="50" class="d">Decolorar</text>

<text x="511" y="555" textLength="38" class="d">Idioma:</text>
<rect x="586.500" y="542.500" width="285" height="21" fill="#fff" stroke="#ababab"/><rect x="588" y="544" width="266" height="11" fill="#f0f0f0"/><rect x="854" y="543" width="17" height="20" fill="#c6c6c6"/>
<path d="M858.500 552l4 4 4-4" fill="none" stroke="#a2a2a2"/>
<text x="590" y="555" textLength="87" class="d">Español (España)</text>
<path d="M589 557.500h264M589 560.500h264" stroke="#666"/>

<text x="511" y="579" textLength="30" class="d">Texto:</text>
<rect x="586.500" y="565.500" width="285" height="19" fill="#fff" stroke="#ababab"/><rect x="588" y="567" width="266" height="15" fill="#f0f0f0"/><rect x="854" y="566" width="17" height="18" fill="#c6c6c6"/>
<path d="M858.500 573l4 4 4-4" fill="none" stroke="#a2a2a2"/>
<text x="589" y="579" textLength="61" class="d">BORRADOR</text>

<text x="511" y="602" textLength="39" class="d">Fuente:</text>
<rect x="586.500" y="588.500" width="285" height="19" fill="#fff" stroke="#ababab"/><rect x="588" y="590" width="266" height="15" fill="#f0f0f0"/><rect x="854" y="589" width="17" height="18" fill="#c6c6c6"/>
<path d="M858.500 596l4 4 4-4" fill="none" stroke="#a2a2a2"/>
<text x="589" y="602" textLength="33" class="d">Calibri</text>

<text x="511" y="625" textLength="42" class="d">Tamaño:</text>
<rect x="586.500" y="611.500" width="138" height="19" fill="#fff" stroke="#ababab"/><rect x="588" y="613" width="119" height="15" fill="#f0f0f0"/><rect x="707" y="612" width="17" height="18" fill="#c6c6c6"/>
<path d="M711.500 619l4 4 4-4" fill="none" stroke="#a2a2a2"/>
<text x="589" y="625" textLength="37" class="d">Autom.</text>

<text x="511" y="648" textLength="31" class="d">Color:</text>
<rect x="586.500" y="634.500" width="138" height="19" fill="#fff" stroke="#ababab"/><rect x="616" y="637" width="61" height="14" fill="#f0f0f0"/><rect x="707" y="635" width="17" height="18" fill="#c6c6c6"/>
<path d="M711.500 642l4 4 4-4" fill="none" stroke="#a2a2a2"/>
<text x="617" y="648" textLength="59" class="d">Automático</text>
<rect x="734.500" y="637.500" width="12" height="13" fill="#f0f0f0" stroke="#bcbcbc"/><path d="M736.500 644l3 3 5-7" fill="none" stroke="#a9a9a9"/>
<text x="751" y="648" textLength="90" class="d">Semitransparente</text>

<text x="511" y="669" textLength="66" class="d">Distribución:</text>
<circle cx="592.500" cy="665" r="5.800" fill="#fff" stroke="#bcbcbc"/><circle cx="592.500" cy="665" r="3.300" fill="#bcbcbc"/>
<text x="603" y="669" textLength="47" class="d">Diagonal</text>
<circle cx="668.500" cy="665" r="5.800" fill="#fff" stroke="#bcbcbc"/>
<text x="679" y="669" textLength="54" class="d">Horizontal</text>

<rect x="629" y="684" width="74" height="22" fill="#ccc"/>
<text x="648.500" y="699.500" textLength="36" style="font-size:11.500px;fill:#fff">Aplicar</text><text x="648" y="699" textLength="36" class="dis">Aplicar</text>
<rect x="713" y="684" width="74" height="22" fill="#ccc"/>
<text x="730.500" y="699.500" textLength="40" style="font-size:11.500px;fill:#fff">Aceptar</text><text x="730" y="699" textLength="40" class="dis">Aceptar</text>
<rect x="797.500" y="684.500" width="73" height="21" fill="#e1e1e1" stroke="#adadad"/>
<text x="812" y="699" textLength="45" style="font-size:11.500px;fill:#111">Cancelar</text>
</svg>
</body></html>
